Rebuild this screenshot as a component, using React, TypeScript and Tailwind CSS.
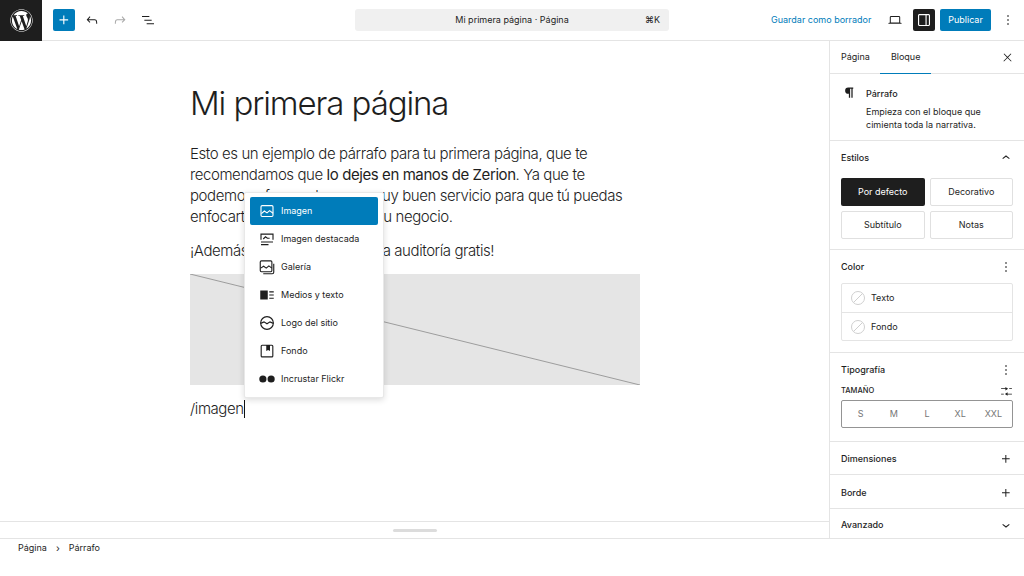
import React from "react";
import { FaWordpress } from "react-icons/fa";

const font = "font-['Inter',sans-serif]";

const Wp = ({ d, className = "w-4 h-4" }: { d: string; className?: string }) => (
  <svg viewBox="0 0 24 24" className={className} fill="currentColor">
    <path d={d} />
  </svg>
);

const PLUS = "M11 12.5V17.5H12.5V12.5H17.5V11H12.5V6H11V11H6V12.5H11Z";
const UNDO = "M18.3 11.7c-.6-.6-1.4-.9-2.3-.9H6.7l2.9-3.3-1.1-1-4.5 5L8.5 16l1-1-2.7-2.7H16c.5 0 .9.2 1.3.5 1 1 1 3.4 1 4.5v.3h1.5v-.2c0-1.5 0-4.3-1.5-5.7z";
const REDO = "M15.6 6.5l-1.1 1 2.9 3.3H8c-.9 0-1.7.3-2.3.9-1.4 1.5-1.4 4.2-1.4 5.6v.2h1.5v-.3c0-1.1 0-3.5 1-4.5.3-.3.7-.5 1.3-.5h9.2L14.5 15l1.1 1.1 4.6-4.6-4.6-5z";
const LIST = "M3 6h11v1.5H3V6Zm3.5 5.5h11V13h-11v-1.5ZM21 17H10v1.5h11V17Z";
const CLOSE = "M13 11.8l6.1-6.3-1-1-6.1 6.2-6.1-6.2-1 1 6.1 6.3-6.5 6.7 1 1 6.5-6.6 6.5 6.6 1-1z";
const MORE = "M13 19h-2v-2h2v2zm0-6h-2v-2h2v2zm0-6h-2V5h2v2z";
const DOWN = "M17.5 11.6L12 16l-5.500-4.400.9-1.200L12 14l4.500-3.600 1 1.200z";
const UP = "M6.500 12.400L12 8l5.500 4.400-.9 1.200L12 10l-4.500 3.600-1-1.200z";
const PILCROW = "M18 4H10a5 5 0 0 0 0 10h1v6.500h2V6h2v14.500h2V6h1V4z";
const SLIDERS = "M2 6h8V3.500l5 3.250-5 3.250V7.500H2zM17 6h5v1.500h-5zM2 16h5v1.500H2zM22 16h-8v-2.500l-5 3.250 5 3.250v-2.500h8z";

const ImageIcon = () => (
  <svg viewBox="0 0 24 24" className="w-[18px] h-[18px]" fill="none" stroke="currentColor" strokeWidth="1.5">
    <rect x="4" y="4.75" width="16" height="14.5" rx="1.5" />
    <path d="M4.5 15.5l4-3.500 3.500 2.500 3.500-3 4.500 3.500" />
  </svg>
);
const FeaturedIcon = () => (
  <svg viewBox="0 0 24 24" className="w-[18px] h-[18px]" fill="none" stroke="currentColor" strokeWidth="1.5">
    <path d="M4 13V5.500h16V13M4 16h16M4 19.500h10" />
    <path d="M7 12l3-3 2.500 2h3" />
  </svg>
);
const GalleryIcon = () => (
  <svg viewBox="0 0 24 24" className="w-[18px] h-[18px]" fill="none" stroke="currentColor" strokeWidth="1.5">
    <rect x="3" y="3.75" width="15.5" height="14.5" rx="1.5" />
    <path d="M3.500 13.500l4-2.500 3.500 2.500 3.500-3 4 3M21 7.500V19a2 2 0 0 1-2 2H7" />
  </svg>
);
const MediaTextIcon = () => (
  <svg viewBox="0 0 24 24" className="w-[18px] h-[18px]" fill="currentColor">
    <path d="M3 6h10v12H3zM15 7h6v1.500h-6zM15 11.250h6v1.500h-6zM15 15.500h6V17h-6z" />
  </svg>
);
const LogoIcon = () => (
  <svg viewBox="0 0 24 24" className="w-[18px] h-[18px]" fill="none" stroke="currentColor" strokeWidth="1.5">
    <circle cx="12" cy="12" r="8.500" />
    <path d="M3.500 12.500l4.500-2 4 2.500 4-2.500 4.500 2" />
  </svg>
);
const CoverIcon = () => (
  <svg viewBox="0 0 24 24" className="w-[18px] h-[18px]" fill="currentColor">
    <path fillRule="evenodd" d="M5.500 3.500h13a2 2 0 0 1 2 2v13a2 2 0 0 1-2 2h-13a2 2 0 0 1-2-2v-13a2 2 0 0 1 2-2zm0 1.500a.5.5 0 0 0-.5.5v13a.5.5 0 0 0 .5.5h13a.5.5 0 0 0 .5-.5v-13a.5.5 0 0 0-.5-.5H16v7l-2.500-1.500L11 12V5H5.500z" />
  </svg>
);
const FlickrIcon = () => (
  <svg viewBox="0 0 24 24" className="w-[18px] h-[18px]" fill="currentColor">
    <circle cx="6.500" cy="12" r="4.800" />
    <circle cx="17.500" cy="12" r="4.800" />
  </svg>
);

const menuItems = [
  { label: "Imagen", icon: <ImageIcon />, active: true },
  { label: "Imagen destacada", icon: <FeaturedIcon /> },
  { label: "Galería", icon: <GalleryIcon /> },
  { label: "Medios y texto", icon: <MediaTextIcon /> },
  { label: "Logo del sitio", icon: <LogoIcon /> },
  { label: "Fondo", icon: <CoverIcon /> },
  { label: "Incrustar Flickr", icon: <FlickrIcon /> },
];

const Header = () => (
  <header className="h-[41px] shrink-0 flex items-center border-b border-[#e4e4e4] bg-white relative">
    <div className="w-[42px] h-[41px] bg-[#1e1e1e] flex items-center justify-center text-white">
      <FaWordpress className="w-[23px] h-[23px]" />
    </div>
    <div className="ml-[11px] w-[22px] h-[22px] rounded-[2px] bg-[#007cba] text-white flex items-center justify-center">
      <Wp d={PLUS} className="w-[18px] h-[18px]" />
    </div>
    <div className="ml-[7px] w-5 flex justify-center text-[#1e1e1e]"><Wp d={UNDO} /></div>
    <div className="ml-2 w-5 flex justify-center text-[#a8a8a8]"><Wp d={REDO} /></div>
    <div className="ml-2 w-5 flex justify-center text-[#1e1e1e]"><Wp d={LIST} /></div>
    <div className="ml-[197px] w-[314px] h-[22px] rounded-[3px] bg-[#f0f0f0] flex items-center justify-center relative text-[9px] text-[#1e1e1e]">
      <span>Mi primera página · Página</span>
      <span className="absolute right-[9px]">⌘K</span>
    </div>
    <span className="ml-[102px] w-[100px] whitespace-nowrap text-[9px] text-[#007cba]">Guardar como borrador</span>
    <div className="ml-[16px] w-[16px] flex justify-center text-[#1e1e1e]">
      <svg viewBox="0 0 24 24" className="w-4 h-4" fill="currentColor">
        <path d="M20.500 16h-.7V8c0-1.100-.9-2-2-2H6.200c-1.100 0-2 .9-2 2v8h-.7c-.8 0-1.500.7-1.500 1.500h20c0-.8-.7-1.500-1.500-1.500zM5.700 8c0-.3.2-.5.5-.5h11.600c.3 0 .5.2.5.5v7.600H5.700V8z" />
      </svg>
    </div>
    <div className="ml-[10px] w-[22px] h-[22px] rounded-[2px] bg-[#1e1e1e] text-white flex items-center justify-center">
      <svg viewBox="0 0 24 24" className="w-[18px] h-[18px]" fill="currentColor">
        <path d="M18 4H6c-1.100 0-2 .9-2 2v12c0 1.100.9 2 2 2h12c1.100 0 2-.9 2-2V6c0-1.100-.9-2-2-2zM5.500 18V6c0-.3.2-.5.500-.5h8v13H6c-.3 0-.5-.2-.5-.5zm13 0c0 .3-.2.5-.5.5h-2.500v-13H18c.3 0 .5.2.5.5v12z" />
      </svg>
    </div>
    <div className="ml-[5px] w-[51px] h-[22px] rounded-[2px] bg-[#007cba] text-white text-[9px] flex items-center justify-center">Publicar</div>
    <div className="ml-[9px] w-4 flex justify-center text-[#1e1e1e]"><Wp d={MORE} /></div>
  </header>
);

const Popover = () => (
  <div className="absolute left-[244px] top-[151px] w-[140px] h-[206px] bg-white rounded-[2px] border border-[#e8e8e8] shadow-[0_2px_6px_rgba(0,0,0,0.14)] px-[5px] pt-[4px]">
    {menuItems.map((item) => (
      <div
        key={item.label}
        className={`h-[28px] rounded-[2px] flex items-center pl-[8px] gap-[5px] tracking-normal font-normal text-[9px] ${item.active ? "bg-[#007cba] text-white" : "text-[#1e1e1e]"}`}
      >
        {item.icon}
        <span className="ml-[-2px] pl-[2px]">{item.label}</span>
      </div>
    ))}
  </div>
);

const Editor = () => (
  <div className="flex-1 min-w-0 flex flex-col">
    <div className="flex-1 pl-[190px] pt-[42px] relative overflow-hidden">
      <div className="w-[450px]">
        <h1 className="text-[33px] leading-[41px] font-light tracking-[-1.1px] text-[#1e1e1e]">Mi primera página</h1>
        <p className="mt-[19px] text-[15px] leading-[21px] font-light tracking-[-0.42px] text-[#1e1e1e]">
          Esto es un ejemplo de párrafo para tu primera página, que te recomendamos que <span className="font-normal">lo dejes en manos de Zerion</span>. Ya que te podemos ofrecer ahora un muy buen servicio para que tú puedas enfocarte en lo que importa: tu negocio.
        </p>
        <p className="mt-[13px] text-[15px] leading-[21px] font-light tracking-[-0.42px] text-[#1e1e1e]">¡Además, ya te ofrecemos una auditoría gratis!</p>
        <div className="mt-[13px] h-[111px] bg-[#e5e5e5]">
          <svg viewBox="0 0 450 111" className="w-full h-full" preserveAspectRatio="none">
            <line x1="0" y1="0" x2="450" y2="111" stroke="#8a8a8a" strokeWidth="0.8" />
          </svg>
        </div>
        <p className="mt-[13px] text-[15px] leading-[21px] font-light tracking-[-0.42px] text-[#1e1e1e] flex items-center">
          /imagen<span className="inline-block w-px h-[18px] bg-[#111]" />
        </p>
      </div>
      <Popover />
    </div>
    <div className="h-[17px] shrink-0 border-t border-[#e4e4e4] flex items-center justify-center">
      <div className="w-[44px] h-[3px] rounded-full bg-[#dcdcdc]" />
    </div>
  </div>
);

const Section = ({ className = "", children }: { className?: string; children: React.ReactNode }) => (
  <section className={`border-b border-[#e4e4e4] px-[11px] ${className}`}>{children}</section>
);

const SectionHead = ({ title, icon }: { title: string; icon: string }) => (
  <div className="flex items-center justify-between h-4 text-[#1e1e1e]">
    <span className="text-[9px] font-medium">{title}</span>
    <Wp d={icon} className="w-4 h-4 mr-[-1px]" />
  </div>
);

const Sidebar = () => (
  <aside className="w-[195px] shrink-0 border-l border-[#e4e4e4] flex flex-col">
    <div className="h-[33px] shrink-0 border-b border-[#e4e4e4] flex items-center text-[9px] text-[#1e1e1e] relative">
      <span className="ml-[11px]">Página</span>
      <span className="ml-[21px]">Bloque</span>
      <div className="absolute left-[50px] w-[51px] bottom-[-1px] h-[1.5px] bg-[#007cba]" />
      <Wp d={CLOSE} className="w-[13px] h-[13px] absolute right-[10px]" />
    </div>
    <Section className="h-[67px] shrink-0 flex gap-[9px] pt-[12px] pl-[12px]">
      <Wp d={PILCROW} className="w-[15px] h-[15px] mt-[-1px] text-[#1e1e1e]" />
      <div className="text-[9px] text-[#1e1e1e] leading-[13px]">
        <div className="font-medium mt-px">Párrafo</div>
        <div className="mt-[5px] w-[130px]">Empieza con el bloque que cimienta toda la narrativa.</div>
      </div>
    </Section>
    <Section className="h-[109px] shrink-0 pt-[9px]">
      <SectionHead title="Estilos" icon={UP} />
      <div className="mt-[12px] grid grid-cols-2 gap-[5px] text-[9px] text-[#1e1e1e]">
        <div className="h-[28px] rounded-[2px] bg-[#1e1e1e] text-white flex items-center justify-center">Por defecto</div>
        <div className="h-[28px] rounded-[2px] border border-[#e0e0e0] flex items-center justify-center">Decorativo</div>
        <div className="h-[28px] rounded-[2px] border border-[#e0e0e0] flex items-center justify-center">Subtítulo</div>
        <div className="h-[28px] rounded-[2px] border border-[#e0e0e0] flex items-center justify-center">Notas</div>
      </div>
    </Section>
    <Section className="h-[103px] shrink-0 pt-[9px]">
      <SectionHead title="Color" icon={MORE} />
      <div className="mt-[8px] rounded-[2px] border border-[#e4e4e4] text-[9px] text-[#1e1e1e]">
        {["Texto", "Fondo"].map((label, i) => (
          <div key={label} className={`h-[28px] flex items-center pl-[9px] gap-[6px] ${i ? "border-t border-[#e4e4e4]" : ""}`}>
            <svg viewBox="0 0 14 14" className="w-[14px] h-[14px]" fill="none" stroke="#cfcfcf">
              <circle cx="7" cy="7" r="6.500" />
              <line x1="2.500" y1="11.500" x2="11.500" y2="2.500" />
            </svg>
            <span>{label}</span>
          </div>
        ))}
      </div>
    </Section>
    <Section className="h-[89px] shrink-0 pt-[9px]">
      <SectionHead title="Tipografía" icon={MORE} />
      <div className="mt-[7px] flex items-center justify-between h-3 text-[#1e1e1e]">
        <span className="text-[7.500px] font-medium">TAMAÑO</span>
        <Wp d={SLIDERS} className="w-[13px] h-[13px]" />
      </div>
      <div className="mt-[3px] h-[28px] rounded-[2px] border border-[#949494] flex items-center text-[9px] text-[#757575] px-[2px]">
        {["S", "M", "L", "XL", "XXL"].map((size) => (
          <span key={size} className="flex-1 text-center">{size}</span>
        ))}
      </div>
    </Section>
    <Section className="h-[33px] shrink-0 flex items-center pt-[2px]"><div className="flex-1"><SectionHead title="Dimensiones" icon={PLUS} /></div></Section>
    <Section className="h-[34px] shrink-0 flex items-center pt-[2px]"><div className="flex-1"><SectionHead title="Borde" icon={PLUS} /></div></Section>
    <div className="flex-1 px-[11px] flex items-center pt-[3px]"><div className="flex-1"><SectionHead title="Avanzado" icon={DOWN} /></div></div>
  </aside>
);

export default function App() {
  return (
    <div className={`w-[1024px] h-[576px] bg-white overflow-hidden flex flex-col ${font}`}>
      <Header />
      <div className="h-[497px] shrink-0 flex">
        <Editor />
        <Sidebar />
      </div>
      <footer className="h-[38px] shrink-0 border-t border-[#e4e4e4] pl-[18px] pt-[2px] flex items-start gap-[9px] text-[9px] text-[#1e1e1e]">
        <span>Página</span>
        <span className="text-[10px] leading-[14px]">›</span>
        <span>Párrafo</span>
      </footer>
    </div>
  );
}
